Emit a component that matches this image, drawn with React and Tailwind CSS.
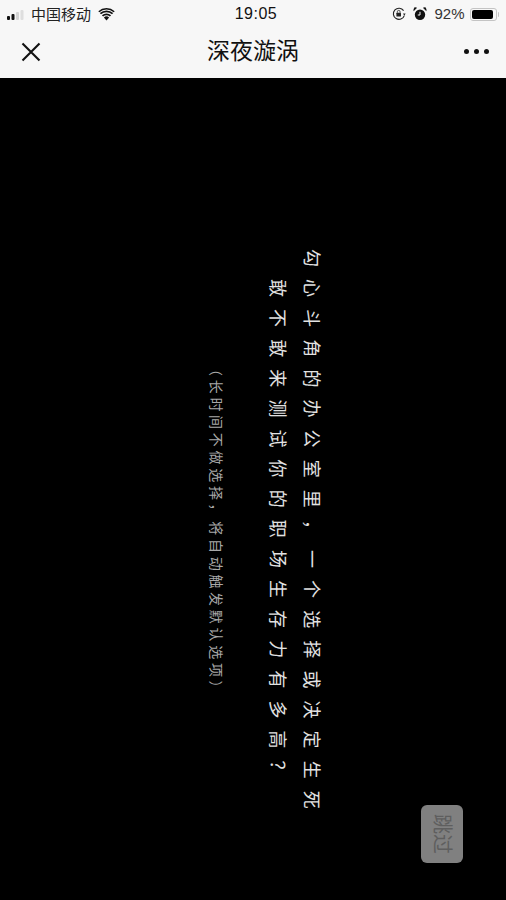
import React from 'react';

const FONT = "font-['Liberation_Sans','Noto_Sans_CJK_SC',sans-serif]";

function SignalBars() {
  return (
    <svg width="20" height="12" viewBox="0 0 20 12" className="mt-px">
      <rect x="0" y="7" width="3" height="4" rx="1" fill="#111" />
      <rect x="4.5" y="5" width="3" height="6" rx="1" fill="#111" />
      <rect x="9" y="3" width="3" height="8" rx="1" fill="#d4d4d4" />
      <rect x="13.5" y="1" width="3" height="10" rx="1" fill="#dedede" />
    </svg>
  );
}

function WifiIcon() {
  return (
    <svg width="17" height="13" viewBox="0 0 17 13">
      <path d="M8.5 12.5 L5.9 9.4 A4 4 0 0 1 11.1 9.4 Z" fill="#111" />
      <path d="M3.9 7.2 A7 7 0 0 1 13.1 7.2 L11.9 8.6 A5.2 5.2 0 0 0 5.1 8.6 Z" fill="#111" />
      <path d="M1.8 4.9 A10.2 10.2 0 0 1 15.2 4.9 L14 6.3 A8.4 8.4 0 0 0 3 6.3 Z" fill="#111" />
      <path d="M0.3 3.2 A12.4 12.4 0 0 1 16.7 3.2 L15.7 4.3 A11 11 0 0 0 1.3 4.3 Z" fill="#111" />
    </svg>
  );
}

function RotationLockIcon() {
  return (
    <svg width="14" height="14" viewBox="0 0 14 14" fill="none">
      <path d="M12.3 8.6 A5.6 5.6 0 1 1 11.6 3.6" stroke="#222" strokeWidth="1.1" />
      <path d="M13.6 6.4 L11 6.4 L12.3 8.8 Z" fill="#222" />
      <rect x="4.4" y="5.8" width="4.6" height="3.6" rx="0.5" fill="#222" />
      <path d="M5.3 5.8 V4.8 A1.4 1.4 0 0 1 8.1 4.8 V5.8" stroke="#222" strokeWidth="0.8" />
    </svg>
  );
}

function AlarmIcon() {
  return (
    <svg width="14" height="14" viewBox="0 0 14 14" fill="none">
      <circle cx="7" cy="7.8" r="5.2" fill="#111" />
      <path d="M7 4.8 V8 H4.8" stroke="#f7f7f7" strokeWidth="1" />
      <path d="M0.8 3.4 L3.4 1 L1.6 0.8 Z M13.2 3.4 L10.6 1 L12.4 0.8 Z" fill="#111" stroke="#111" />
    </svg>
  );
}

function BatteryIcon() {
  return (
    <div className="flex items-center">
      <div className="w-[27px] h-[13px] rounded-[3px] border border-[#c4c4c4] p-px">
        <div className="h-full w-[92%] rounded-[2px] bg-black" />
      </div>
      <div className="ml-px h-[5px] w-[1.5px] rounded-r-sm bg-[#c4c4c4]" />
    </div>
  );
}

function StatusBar() {
  return (
    <div className="relative h-[27px] flex items-center justify-between pl-[7px] pr-[7px] pt-[1px]">
      <div className="flex items-center text-[#222]">
        <SignalBars />
        <span className="ml-[4px] text-[15px] leading-none">中国移动</span>
        <span className="ml-[7px]"><WifiIcon /></span>
      </div>
      <span className="absolute left-0 right-0 pl-[6px] text-center text-[16px] text-[#111] tracking-[0.5px]">19:05</span>
      <div className="flex items-center">
        <RotationLockIcon />
        <span className="ml-[7px]"><AlarmIcon /></span>
        <span className="ml-[7px] mr-[5px] text-[15px] text-[#333]">92%</span>
        <BatteryIcon />
      </div>
    </div>
  );
}

function NavBar() {
  return (
    <div className="relative h-[51px] flex items-center justify-between pl-[21px] pr-[17px] pb-[2px]">
      <svg width="20" height="20" viewBox="0 0 20 20" fill="none" stroke="#111" strokeWidth="2.1">
        <path d="M1.5 1.5 L18.5 18.5 M18.5 1.5 L1.5 18.5" />
      </svg>
      <span className="absolute left-0 right-0 text-center text-[23px] text-[#111]">深夜漩涡</span>
      <div className="flex items-center gap-[5px]">
        <span className="w-[5px] h-[5px] rounded-full bg-[#111]" />
        <span className="w-[5px] h-[5px] rounded-full bg-[#111]" />
        <span className="w-[5px] h-[5px] rounded-full bg-[#111]" />
      </div>
    </div>
  );
}

export default function App() {
  return (
    <div className={`relative w-[506px] h-[900px] flex flex-col overflow-hidden bg-black ${FONT}`}>
      <div className="bg-[#f7f7f7]">
        <StatusBar />
        <NavBar />
      </div>

      {/* Rotated intro text: vertical-rl flows the lines right to left */}
      <div className="flex-1 flex justify-center">
        <div className="mt-[171px] ml-[27px] h-[572px] whitespace-nowrap text-center [writing-mode:vertical-rl] [text-orientation:sideways]">
          <div className="text-[18px] leading-[34px] tracking-[12.1px] text-[#e2e2e2]">
            <div>勾心斗角的办公室里，一个选择或决定生死</div>
            <div>敢不敢来测试你的职场生存力有多高？</div>
          </div>
          <div className="mr-[34px] pb-[10px] text-[14px] leading-[20px] tracking-[3.7px] text-[#a8a8a8]">
            （长时间不做选择，将自动触发默认选项）
          </div>
        </div>
      </div>

      {/* Skip button */}
      <div className="absolute left-[421px] top-[805px] w-[42px] h-[58px] rounded-[6px] bg-[#808080] flex items-center justify-center">
        <span className="text-[20px] leading-none text-[#5e5e5e] [writing-mode:vertical-rl] [text-orientation:sideways]">跳过</span>
      </div>
    </div>
  );
}
